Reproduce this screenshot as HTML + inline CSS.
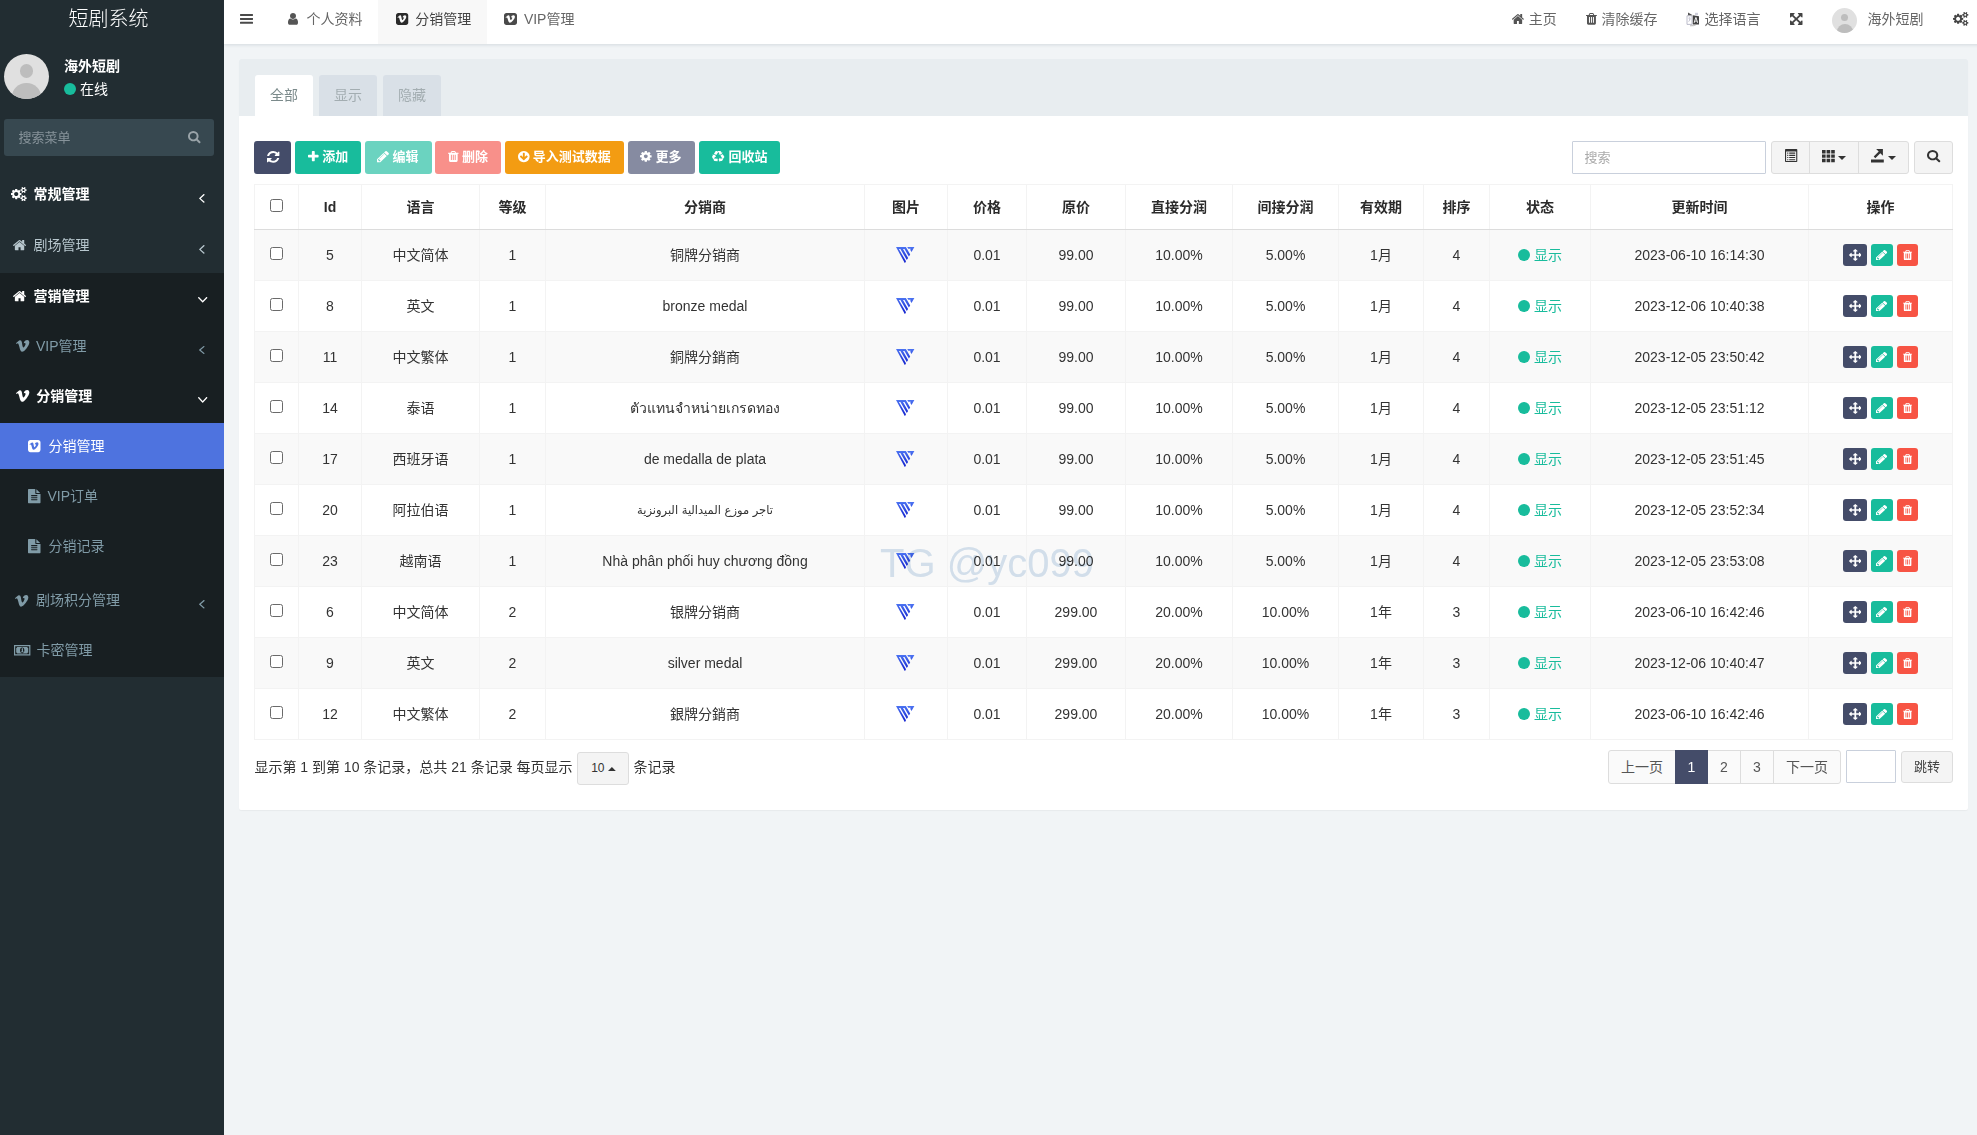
<!DOCTYPE html>
<html lang="zh-CN">
<head>
<meta charset="utf-8">
<title>短剧系统</title>
<style>
html,body{margin:0;padding:0}
body{width:1977px;height:1135px;overflow:hidden;position:relative;background:#f1f4f6;
 font-family:"Liberation Sans","Noto Sans CJK SC",sans-serif;font-size:14px;line-height:20px;color:#333}
.i{position:absolute;display:block;overflow:visible}
.t{position:absolute;white-space:nowrap;display:block}
.b{font-weight:bold}
.abs{position:absolute}
/* sidebar */
#sidebar{position:absolute;left:0;top:0;width:224px;height:1135px;background:#222d32}
#sidebar .open{position:absolute;left:0;top:273px;width:224px;height:403.5px;background:#181f22}
#sidebar .active{position:absolute;left:0;top:423px;width:224px;height:46px;background:#4e73df}
#sidebar .search{position:absolute;left:4px;top:119px;width:210px;height:37px;background:#374850;border-radius:3px}
.avatar{position:absolute;border-radius:50%;background:#e0e0e0;overflow:hidden}
.avatar:before{content:"";position:absolute;left:34.5%;top:23%;width:31%;height:31%;border-radius:50%;background:#bdbdbd}
.avatar:after{content:"";position:absolute;left:18%;top:64%;width:64%;height:60%;border-radius:50%;background:#bdbdbd}
.dot{position:absolute;border-radius:50%;background:#18bc9c}
/* header */
#header{position:absolute;left:224px;top:0;width:1765px;height:44px;background:#fff;box-shadow:0 1px 3px rgba(60,80,100,.16)}
#header .tabon{position:absolute;left:154px;top:0;width:108.5px;height:44px;background:#f8f8f8}
/* panel */
#panel{position:absolute;left:239px;top:59px;width:1729px;height:751px;background:#fff;border-radius:2px;box-shadow:0 1px 1px rgba(0,0,0,.04)}
#panel .head{position:absolute;left:0;top:0;width:1729px;height:57px;background:#e8edf0;border-radius:2px 2px 0 0}
.tab{position:absolute;top:75px;width:58px;height:41px;border-radius:3px 3px 0 0;background:#d9e0e7;text-align:center;line-height:41px;color:#a3adb1}
.tab.on{background:#fff;color:#7b8a8b}
.btn{position:absolute;top:141px;height:33px;border-radius:3px}
.sbtn{position:absolute;background:#f4f4f4;border:1px solid #ddd;box-sizing:border-box}
.inp{position:absolute;background:#fff;border:1px solid #c9d0dc;box-sizing:border-box}
/* table */
#tb{position:absolute;left:254px;top:184px;width:1699px;border-collapse:collapse;table-layout:fixed}
#tb th,#tb td{border:1px solid #f3f3f3;text-align:center;padding:0;vertical-align:middle;overflow:hidden;white-space:nowrap;position:relative}
#tb th{height:44px;font-weight:bold;border-bottom:1px solid #dcdcdc;color:#2b2b2b}
#tb td{height:50px}
#tb tbody tr:nth-child(odd) td{background:#f9f9f9}
.cb{display:inline-block;width:11px;height:11px;border:1px solid #6a6a6a;border-radius:2.5px;background:#fff;vertical-align:middle;position:relative;top:-3px}
.st{color:#18bc9c}
.st i{display:inline-block;width:12px;height:12px;border-radius:50%;background:#18bc9c;vertical-align:middle;margin-right:4px;position:relative;top:-1px}
.ob{display:inline-block;height:22px;border-radius:3px;vertical-align:middle;position:relative;margin:0 2px}
.ob svg{position:absolute;display:block}
.logo{display:inline-block;vertical-align:middle;width:18.5px;height:16.5px;position:relative;left:-0.5px;top:-1.2px}
.pg{position:absolute;top:750px;height:34px;box-sizing:border-box;border:1px solid #ddd;background:#fafafa;color:#555;text-align:center;line-height:32px}
#wm{position:absolute;left:880.1px;top:540.4px;font-size:40px;line-height:46px;color:#d7e4f0;white-space:nowrap;mix-blend-mode:multiply;font-family:"Liberation Sans",sans-serif}
</style>
</head>
<body>

<div id="sidebar">
<div class="open"></div><div class="active"></div>
<span class="t " style="left:68.50px;top:4.60px;line-height:28px;font-size:20px;font-weight:300;color:#fff;letter-spacing:0">短剧系统</span>
<div class="avatar" style="left:4px;top:54px;width:45px;height:45px"></div>
<span class="t b" style="left:64.00px;top:55.60px;line-height:20px;color:#fff">海外短剧</span>
<div class="dot" style="left:63.8px;top:82.8px;width:12.2px;height:12.2px"></div>
<span class="t " style="left:80.00px;top:79.00px;line-height:20px;color:#fff">在线</span>
<div class="search"></div>
<span class="t " style="left:18.50px;top:127.90px;line-height:20px;font-size:13px;color:#87939a">搜索菜单</span>
<svg class="i" style="left:187.50px;top:130.60px;width:12.50px;height:12.20px;" viewBox="64.0 128.0 1664.0 1664.0" preserveAspectRatio="none"><path fill="#9aa4a9" d="M1216 832q0-185-131.500-316.500t-316.500-131.500-316.500 131.500-131.500 316.500 131.500 316.500 316.500 131.500 316.500-131.500 131.500-316.500zm512 832q0 52-38 90t-90 38q-54 0-90-38l-343-342q-179 124-399 124-143 0-273.500-55.500t-225-150-150-225-55.500-273.500 55.500-273.500 150-225 225-150 273.500-55.500 273.500 55.500 225 150 150 225 55.500 273.500q0 220-124 399l343 343q37 37 37 90z"/></svg>
<svg class="i" style="left:11.25px;top:186.90px;width:15.65px;height:14.10px;" viewBox="64.0 16.0 1920.0 1761.0" preserveAspectRatio="none"><path fill="#fff" d="M960 896q0-106-75-181t-181-75-181 75-75 181 75 181 181 75 181-75 75-181zm768 512q0-52-38-90t-90-38-90 38-38 90q0 53 37.500 90.500t90.500 37.500 90.500-37.500 37.500-90.500zm0-1024q0-52-38-90t-90-38-90 38-38 90q0 53 37.500 90.500t90.500 37.500 90.500-37.500 37.500-90.500zm-384 421v185q0 10-7 19.500t-16 10.500l-155 24q-11 35-32 76 34 48 90 115 7 11 7 20 0 12-7 19-23 30-82.500 89.500t-78.500 59.500q-11 0-21-7l-115-90q-37 19-77 31-11 108-23 155-7 24-30 24h-186q-11 0-20-7.500t-10-17.500l-23-153q-34-10-75-31l-118 89q-7 7-20 7-11 0-21-8-144-133-144-160 0-9 7-19 10-14 41-53t47-61q-23-44-35-82l-152-24q-10-1-17-9.500t-7-19.500v-185q0-10 7-19.500t16-10.500l155-24q11-35 32-76-34-48-90-115-7-11-7-20 0-12 7-20 22-30 82-89t79-59q11 0 21 7l115 90q34-18 77-32 11-108 23-154 7-24 30-24h186q11 0 20 7.500t10 17.500l23 153q34 10 75 31l118-89q8-7 20-7 11 0 21 8 144 133 144 160 0 8-7 19-12 16-42 54t-45 60q23 48 34 82l152 23q10 2 17 10.500t7 19.500zm640 533v140q0 16-149 31-12 27-30 52 51 113 51 138 0 4-4 7-122 71-124 71-8 0-46-47t-52-68q-20 2-30 2t-30-2q-14 21-52 68t-46 47q-2 0-124-71-4-3-4-7 0-25 51-138-18-25-30-52-149-15-149-31v-140q0-16 149-31 13-29 30-52-51-113-51-138 0-4 4-7 4-2 35-20t59-34 30-16q8 0 46 46.500t52 67.500q20-2 30-2t30 2q51-71 92-112l6-2q4 0 124 70 4 3 4 7 0 25-51 138 17 23 30 52 149 15 149 31zm0-1024v140q0 16-149 31-12 27-30 52 51 113 51 138 0 4-4 7-122 71-124 71-8 0-46-47t-52-68q-20 2-30 2t-30-2q-14 21-52 68t-46 47q-2 0-124-71-4-3-4-7 0-25 51-138-18-25-30-52-149-15-149-31v-140q0-16 149-31 13-29 30-52-51-113-51-138 0-4 4-7 4-2 35-20t59-34 30-16q8 0 46 46.500t52 67.500q20-2 30-2t30 2q51-71 92-112l6-2q4 0 124 70 4 3 4 7 0 25-51 138 17 23 30 52 149 15 149 31z"/></svg>
<span class="t b" style="left:33.50px;top:183.60px;line-height:20px;color:#fff">常规管理</span>
<svg class="i" style="left:198.75px;top:194.00px;width:5.65px;height:8.75px;" viewBox="621.0 461.0 582.0 998.0" preserveAspectRatio="none"><path fill="#fff" d="M1203 544q0 13-10 23l-393 393 393 393q10 10 10 23t-10 23l-50 50q-10 10-23 10t-23-10l-466-466q-10-10-10-23t10-23l466-466q10-10 23-10t23 10l50 50q10 10 10 23z"/></svg>
<svg class="i" style="left:12.50px;top:239.75px;width:13.10px;height:10.25px;" viewBox="89.9 253.0 1612.2 1283.0" preserveAspectRatio="none"><path fill="#b8c7ce" d="M1472 992v480q0 26-19 45t-45 19h-384v-384h-256v384h-384q-26 0-45-19t-19-45v-480q0-1 .5-3t.5-3l575-474 575 474q1 2 1 6zm223-69l-62 74q-8 9-21 11h-3q-13 0-21-7l-692-577-692 577q-12 8-24 7-13-2-21-11l-62-74q-8-10-7-23.500t11-21.500l719-599q32-26 76-26t76 26l244 204v-195q0-14 9-23t23-9h192q14 0 23 9t9 23v408l219 182q10 8 11 21.500t-7 23.500z"/></svg>
<span class="t " style="left:33.50px;top:234.60px;line-height:20px;color:#b8c7ce">剧场管理</span>
<svg class="i" style="left:198.75px;top:245.00px;width:5.65px;height:8.75px;" viewBox="621.0 461.0 582.0 998.0" preserveAspectRatio="none"><path fill="#b8c7ce" d="M1203 544q0 13-10 23l-393 393 393 393q10 10 10 23t-10 23l-50 50q-10 10-23 10t-23-10l-466-466q-10-10-10-23t10-23l466-466q10-10 23-10t23 10l50 50q10 10 10 23z"/></svg>
<svg class="i" style="left:12.50px;top:290.75px;width:13.10px;height:10.25px;" viewBox="89.9 253.0 1612.2 1283.0" preserveAspectRatio="none"><path fill="#fff" d="M1472 992v480q0 26-19 45t-45 19h-384v-384h-256v384h-384q-26 0-45-19t-19-45v-480q0-1 .5-3t.5-3l575-474 575 474q1 2 1 6zm223-69l-62 74q-8 9-21 11h-3q-13 0-21-7l-692-577-692 577q-12 8-24 7-13-2-21-11l-62-74q-8-10-7-23.500t11-21.500l719-599q32-26 76-26t76 26l244 204v-195q0-14 9-23t23-9h192q14 0 23 9t9 23v408l219 182q10 8 11 21.500t-7 23.500z"/></svg>
<span class="t b" style="left:33.50px;top:285.90px;line-height:20px;color:#fff">营销管理</span>
<svg class="i" style="left:197.50px;top:297.00px;width:9.40px;height:5.60px;" viewBox="397.0 653.0 998.0 582.0" preserveAspectRatio="none"><path fill="#fff" d="M1395 736q0 13-10 23l-466 466q-10 10-23 10t-23-10l-466-466q-10-10-10-23t10-23l50-50q10-10 23-10t23 10l393 393 393-393q10-10 23-10t23 10l50 50q10 10 10 23z"/></svg>
<svg class="i" style="left:15.60px;top:340.00px;width:13.40px;height:11.75px;" viewBox="311.0 415.8 1109.6 960.2" preserveAspectRatio="none"><path fill="#809ba7" d="M1420 638q10-216-161-222-231-8-312 261 44-19 82-19 85 0 74 96-4 57-74 167t-105 110q-43 0-82-169-13-54-45-255-30-189-160-177-59 7-164 100l-81 72-81 72 52 67q76-52 87-52 57 0 107 179 15 55 45 164.500t45 164.500q68 179 164 179 157 0 383-294 220-283 226-444z"/></svg>
<span class="t " style="left:36.00px;top:335.75px;line-height:20px;color:#809ba7">VIP管理</span>
<svg class="i" style="left:198.75px;top:346.40px;width:5.65px;height:8.10px;" viewBox="621.0 461.0 582.0 998.0" preserveAspectRatio="none"><path fill="#809ba7" d="M1203 544q0 13-10 23l-393 393 393 393q10 10 10 23t-10 23l-50 50q-10 10-23 10t-23-10l-466-466q-10-10-10-23t10-23l466-466q10-10 23-10t23 10l50 50q10 10 10 23z"/></svg>
<svg class="i" style="left:15.60px;top:390.00px;width:13.40px;height:11.75px;" viewBox="311.0 415.8 1109.6 960.2" preserveAspectRatio="none"><path fill="#fff" d="M1420 638q10-216-161-222-231-8-312 261 44-19 82-19 85 0 74 96-4 57-74 167t-105 110q-43 0-82-169-13-54-45-255-30-189-160-177-59 7-164 100l-81 72-81 72 52 67q76-52 87-52 57 0 107 179 15 55 45 164.500t45 164.500q68 179 164 179 157 0 383-294 220-283 226-444z"/></svg>
<span class="t b" style="left:36.25px;top:386.00px;line-height:20px;color:#fff">分销管理</span>
<svg class="i" style="left:197.50px;top:396.90px;width:9.40px;height:5.85px;" viewBox="397.0 653.0 998.0 582.0" preserveAspectRatio="none"><path fill="#fff" d="M1395 736q0 13-10 23l-466 466q-10 10-23 10t-23-10l-466-466q-10-10-10-23t10-23l50-50q10-10 23-10t23 10l393 393 393-393q10-10 23-10t23 10l50 50q10 10 10 23z"/></svg>
<svg class="i" style="left:27.75px;top:439.75px;width:12.50px;height:12.15px;" viewBox="128.0 128.0 1536.0 1536.0" preserveAspectRatio="none"><path fill="#fff" d="M1420 638q10-216-161-222-231-8-312 261 44-19 82-19 85 0 74 96-4 57-74 167t-105 110q-43 0-82-169-13-54-45-255-30-189-160-177-59 7-164 100l-81 72-81 72 52 67q76-52 87-52 57 0 107 179 15 55 45 164.500t45 164.500q68 179 164 179 157 0 383-294 220-283 226-444zm244-222v960q0 119-84.500 203.500t-203.500 84.500h-960q-119 0-203.500-84.500t-84.500-203.500v-960q0-119 84.500-203.500t203.500-84.500h960q119 0 203.500 84.500t84.500 203.500z"/></svg>
<span class="t " style="left:48.50px;top:435.80px;line-height:20px;color:#fff">分销管理</span>
<svg class="i" style="left:27.75px;top:488.75px;width:12.50px;height:14.25px;" viewBox="128.0 0.0 1536.0 1792.0" preserveAspectRatio="none"><path fill="#809ba7" d="M1596 476q14 14 28 36h-472v-472q22 14 36 28zm-476 164h544v1056q0 40-28 68t-68 28h-1344q-40 0-68-28t-28-68v-1600q0-40 28-68t68-28h800v544q0 40 28 68t68 28zm160 736v-64q0-14-9-23t-23-9h-704q-14 0-23 9t-9 23v64q0 14 9 23t23 9h704q14 0 23-9t9-23zm0-256v-64q0-14-9-23t-23-9h-704q-14 0-23 9t-9 23v64q0 14 9 23t23 9h704q14 0 23-9t9-23zm0-256v-64q0-14-9-23t-23-9h-704q-14 0-23 9t-9 23v64q0 14 9 23t23 9h704q14 0 23-9t9-23z"/></svg>
<span class="t " style="left:47.50px;top:485.60px;line-height:20px;color:#809ba7">VIP订单</span>
<svg class="i" style="left:27.75px;top:538.75px;width:12.50px;height:14.25px;" viewBox="128.0 0.0 1536.0 1792.0" preserveAspectRatio="none"><path fill="#809ba7" d="M1596 476q14 14 28 36h-472v-472q22 14 36 28zm-476 164h544v1056q0 40-28 68t-68 28h-1344q-40 0-68-28t-28-68v-1600q0-40 28-68t68-28h800v544q0 40 28 68t68 28zm160 736v-64q0-14-9-23t-23-9h-704q-14 0-23 9t-9 23v64q0 14 9 23t23 9h704q14 0 23-9t9-23zm0-256v-64q0-14-9-23t-23-9h-704q-14 0-23 9t-9 23v64q0 14 9 23t23 9h704q14 0 23-9t9-23zm0-256v-64q0-14-9-23t-23-9h-704q-14 0-23 9t-9 23v64q0 14 9 23t23 9h704q14 0 23-9t9-23z"/></svg>
<span class="t " style="left:48.50px;top:535.50px;line-height:20px;color:#809ba7">分销记录</span>
<svg class="i" style="left:15.40px;top:594.50px;width:13.40px;height:11.70px;" viewBox="311.0 415.8 1109.6 960.2" preserveAspectRatio="none"><path fill="#809ba7" d="M1420 638q10-216-161-222-231-8-312 261 44-19 82-19 85 0 74 96-4 57-74 167t-105 110q-43 0-82-169-13-54-45-255-30-189-160-177-59 7-164 100l-81 72-81 72 52 67q76-52 87-52 57 0 107 179 15 55 45 164.500t45 164.500q68 179 164 179 157 0 383-294 220-283 226-444z"/></svg>
<span class="t " style="left:36.00px;top:590.00px;line-height:20px;color:#809ba7">剧场积分管理</span>
<svg class="i" style="left:198.80px;top:600.40px;width:5.70px;height:8.60px;" viewBox="621.0 461.0 582.0 998.0" preserveAspectRatio="none"><path fill="#809ba7" d="M1203 544q0 13-10 23l-393 393 393 393q10 10 10 23t-10 23l-50 50q-10 10-23 10t-23-10l-466-466q-10-10-10-23t10-23l466-466q10-10 23-10t23 10l50 50q10 10 10 23z"/></svg>
<svg class="i" style="left:13.7px;top:644.7px;width:16.4px;height:10.5px" viewBox="0 0 164 105"><path fill="#809ba7" fill-rule="evenodd" d="M0 0h164v105H0zM12 12v81h140V12zM22 30a14 14 0 0 0 10-10h100a14 14 0 0 0 10 10v45a14 14 0 0 0-10 10H32a14 14 0 0 0-10-10zM82 24c-14 0-22 13-22 29s8 29 22 29 22-13 22-29-8-29-22-29zM76 38l8-6h6v34h6v6H70v-6h8V44l-2 2z"/></svg>
<span class="t " style="left:36.50px;top:639.70px;line-height:20px;color:#809ba7">卡密管理</span>
</div>
<div id="header"><div class="tabon"></div></div>
<svg class="i" style="left:240.00px;top:14.00px;width:13.00px;height:9.80px;" viewBox="128.0 256.0 1536.0 1280.0" preserveAspectRatio="none"><path fill="#4a4a4a" d="M1664 1344v128q0 26-19 45t-45 19h-1408q-26 0-45-19t-19-45v-128q0-26 19-45t45-19h1408q26 0 45 19t19 45zm0-512v128q0 26-19 45t-45 19h-1408q-26 0-45-19t-19-45v-128q0-26 19-45t45-19h1408q26 0 45 19t19 45zm0-512v128q0 26-19 45t-45 19h-1408q-26 0-45-19t-19-45v-128q0-26 19-45t45-19h1408q26 0 45 19t19 45z"/></svg>
<svg class="i" style="left:288.00px;top:12.90px;width:10.00px;height:11.85px;" viewBox="256.0 128.0 1280.0 1536.0" preserveAspectRatio="none"><path fill="#555" d="M1536 1399q0 109-62.500 187t-150.500 78h-854q-88 0-150.500-78t-62.500-187q0-85 8.500-160.500t31.500-152 58.500-131 94-89 134.500-34.500q131 128 313 128t313-128q76 0 134.500 34.500t94 89 58.500 131 31.500 152 8.500 160.500zm-256-887q0 159-112.500 271.500t-271.500 112.500-271.500-112.500-112.500-271.500 112.500-271.500 271.500-112.500 271.500 112.500 112.500 271.500z"/></svg>
<span class="t " style="left:306.50px;top:8.50px;line-height:20px;color:#666">个人资料</span>
<svg class="i" style="left:395.50px;top:12.75px;width:12.25px;height:12.00px;" viewBox="128.0 128.0 1536.0 1536.0" preserveAspectRatio="none"><path fill="#2b2b2b" d="M1420 638q10-216-161-222-231-8-312 261 44-19 82-19 85 0 74 96-4 57-74 167t-105 110q-43 0-82-169-13-54-45-255-30-189-160-177-59 7-164 100l-81 72-81 72 52 67q76-52 87-52 57 0 107 179 15 55 45 164.500t45 164.500q68 179 164 179 157 0 383-294 220-283 226-444zm244-222v960q0 119-84.500 203.500t-203.500 84.500h-960q-119 0-203.500-84.500t-84.500-203.500v-960q0-119 84.500-203.500t203.500-84.500h960q119 0 203.500 84.500t84.500 203.500z"/></svg>
<span class="t " style="left:415.25px;top:8.50px;line-height:20px;color:#444">分销管理</span>
<svg class="i" style="left:504.40px;top:12.75px;width:13.00px;height:12.00px;" viewBox="128.0 128.0 1536.0 1536.0" preserveAspectRatio="none"><path fill="#4a4a4a" d="M1420 638q10-216-161-222-231-8-312 261 44-19 82-19 85 0 74 96-4 57-74 167t-105 110q-43 0-82-169-13-54-45-255-30-189-160-177-59 7-164 100l-81 72-81 72 52 67q76-52 87-52 57 0 107 179 15 55 45 164.500t45 164.500q68 179 164 179 157 0 383-294 220-283 226-444zm244-222v960q0 119-84.500 203.500t-203.500 84.500h-960q-119 0-203.500-84.500t-84.500-203.500v-960q0-119 84.500-203.500t203.500-84.500h960q119 0 203.500 84.500t84.500 203.500z"/></svg>
<span class="t " style="left:523.90px;top:8.50px;line-height:20px;color:#666">VIP管理</span>
<svg class="i" style="left:1511.90px;top:13.75px;width:11.85px;height:10.00px;" viewBox="89.9 253.0 1612.2 1283.0" preserveAspectRatio="none"><path fill="#555" d="M1472 992v480q0 26-19 45t-45 19h-384v-384h-256v384h-384q-26 0-45-19t-19-45v-480q0-1 .5-3t.5-3l575-474 575 474q1 2 1 6zm223-69l-62 74q-8 9-21 11h-3q-13 0-21-7l-692-577-692 577q-12 8-24 7-13-2-21-11l-62-74q-8-10-7-23.500t11-21.500l719-599q32-26 76-26t76 26l244 204v-195q0-14 9-23t23-9h192q14 0 23 9t9 23v408l219 182q10 8 11 21.500t-7 23.500z"/></svg>
<span class="t " style="left:1528.75px;top:8.50px;line-height:20px;color:#666">主页</span>
<svg class="i" style="left:1586.00px;top:13.00px;width:10.90px;height:11.75px;" viewBox="192.0 128.0 1408.0 1536.0" preserveAspectRatio="none"><path fill="#555" d="M704 1376v-704q0-14-9-23t-23-9h-64q-14 0-23 9t-9 23v704q0 14 9 23t23 9h64q14 0 23-9t9-23zm256 0v-704q0-14-9-23t-23-9h-64q-14 0-23 9t-9 23v704q0 14 9 23t23 9h64q14 0 23-9t9-23zm256 0v-704q0-14-9-23t-23-9h-64q-14 0-23 9t-9 23v704q0 14 9 23t23 9h64q14 0 23-9t9-23zm-544-992h448l-48-117q-7-9-17-11h-317q-10 2-17 11zm928 32v64q0 14-9 23t-23 9h-96v948q0 83-47 143.500t-113 60.500h-832q-66 0-113-58.500t-47-141.500v-952h-96q-14 0-23-9t-9-23v-64q0-14 9-23t23-9h309l70-167q15-37 54-63t79-26h320q40 0 79 26t54 63l70 167h309q14 0 23 9t9 23z"/></svg>
<span class="t " style="left:1601.50px;top:8.50px;line-height:20px;color:#666">清除缓存</span>
<svg class="i" style="left:1686px;top:11.5px;width:13.5px;height:14.5px" viewBox="0 0 135 145"><path fill="#fff" stroke="#b4b4c4" stroke-width="9" d="M10 38h50v86H10z"/><path fill="#555" d="M20 5l48 27H20z"/><path fill="#444" d="M68 32l62 10v82H68z"/><path fill="#fff" d="M94 52h10l17 56h-10l-3-12H90l-3 12H77zm5 12l-7 23h14z"/><path fill="#c9c9d6" d="M22 58h26v7H22zM32 50h7v40h-7zM22 92q14-8 20-26l6 3q-8 22-22 30z"/><path fill="none" stroke="#9a9a9a" stroke-width="7" d="M40 138q40 4 66-14"/><path fill="#d0d0dc" d="M90 8h30v24H90z"/></svg>
<span class="t " style="left:1704.40px;top:8.50px;line-height:20px;color:#666">选择语言</span>
<svg class="i" style="left:1789.75px;top:13.10px;width:12.50px;height:11.90px;" viewBox="128.0 128.0 1536.0 1536.0" preserveAspectRatio="none"><path fill="#444" d="M1411 541l-355 355 355 355 144-144q29-31 70-14 39 17 39 59v448q0 26-19 45t-45 19h-448q-42 0-59-40-17-39 14-69l144-144-355-355-355 355 144 144q31 30 14 69-17 40-59 40h-448q-26 0-45-19t-19-45v-448q0-42 40-59 39-17 69 14l144 144 355-355-355-355-144 144q-19 19-45 19-12 0-24-5-40-17-40-59v-448q0-26 19-45t45-19h448q42 0 59 40 17 39-14 69l-144 144 355 355 355-355-144-144q-31-30-14-69 17-40 59-40h448q26 0 45 19t19 45v448q0 42-39 59-13 5-25 5-26 0-45-19z"/></svg>
<div class="avatar" style="left:1832px;top:7.8px;width:25px;height:25px"></div>
<span class="t " style="left:1867.50px;top:8.50px;line-height:20px;color:#666">海外短剧</span>
<svg class="i" style="left:1952.75px;top:12.25px;width:15.35px;height:13.75px;" viewBox="64.0 16.0 1920.0 1761.0" preserveAspectRatio="none"><path fill="#444" d="M960 896q0-106-75-181t-181-75-181 75-75 181 75 181 181 75 181-75 75-181zm768 512q0-52-38-90t-90-38-90 38-38 90q0 53 37.500 90.500t90.500 37.500 90.500-37.500 37.500-90.500zm0-1024q0-52-38-90t-90-38-90 38-38 90q0 53 37.500 90.500t90.500 37.500 90.500-37.500 37.500-90.500zm-384 421v185q0 10-7 19.500t-16 10.500l-155 24q-11 35-32 76 34 48 90 115 7 11 7 20 0 12-7 19-23 30-82.500 89.500t-78.500 59.500q-11 0-21-7l-115-90q-37 19-77 31-11 108-23 155-7 24-30 24h-186q-11 0-20-7.500t-10-17.500l-23-153q-34-10-75-31l-118 89q-7 7-20 7-11 0-21-8-144-133-144-160 0-9 7-19 10-14 41-53t47-61q-23-44-35-82l-152-24q-10-1-17-9.500t-7-19.500v-185q0-10 7-19.500t16-10.500l155-24q11-35 32-76-34-48-90-115-7-11-7-20 0-12 7-20 22-30 82-89t79-59q11 0 21 7l115 90q34-18 77-32 11-108 23-154 7-24 30-24h186q11 0 20 7.500t10 17.500l23 153q34 10 75 31l118-89q8-7 20-7 11 0 21 8 144 133 144 160 0 8-7 19-12 16-42 54t-45 60q23 48 34 82l152 23q10 2 17 10.500t7 19.500zm640 533v140q0 16-149 31-12 27-30 52 51 113 51 138 0 4-4 7-122 71-124 71-8 0-46-47t-52-68q-20 2-30 2t-30-2q-14 21-52 68t-46 47q-2 0-124-71-4-3-4-7 0-25 51-138-18-25-30-52-149-15-149-31v-140q0-16 149-31 13-29 30-52-51-113-51-138 0-4 4-7 4-2 35-20t59-34 30-16q8 0 46 46.500t52 67.500q20-2 30-2t30 2q51-71 92-112l6-2q4 0 124 70 4 3 4 7 0 25-51 138 17 23 30 52 149 15 149 31zm0-1024v140q0 16-149 31-12 27-30 52 51 113 51 138 0 4-4 7-122 71-124 71-8 0-46-47t-52-68q-20 2-30 2t-30-2q-14 21-52 68t-46 47q-2 0-124-71-4-3-4-7 0-25 51-138-18-25-30-52-149-15-149-31v-140q0-16 149-31 13-29 30-52-51-113-51-138 0-4 4-7 4-2 35-20t59-34 30-16q8 0 46 46.500t52 67.500q20-2 30-2t30 2q51-71 92-112l6-2q4 0 124 70 4 3 4 7 0 25-51 138 17 23 30 52 149 15 149 31z"/></svg>
<div id="panel"><div class="head"></div></div>
<div class="tab on" style="left:255px">全部</div><div class="tab" style="left:319px">显示</div><div class="tab" style="left:383px">隐藏</div>
<div class="btn" style="left:254px;width:37px;background:#444c69"></div>
<svg class="i" style="left:266.60px;top:150.50px;width:12.40px;height:11.80px;" viewBox="128.0 128.0 1536.0 1536.0" preserveAspectRatio="none"><path fill="#fff" d="M1639 1056q0 5-1 7-64 268-268 434.500t-478 166.500q-146 0-282.500-55t-243.500-157l-129 129q-19 19-45 19t-45-19-19-45v-448q0-26 19-45t45-19h448q26 0 45 19t19 45-19 45l-137 137q71 66 161 102t187 36q134 0 250-65t186-179q11-17 53-117 8-23 30-23h192q13 0 22.500 9.500t9.500 22.500zm25-800v448q0 26-19 45t-45 19h-448q-26 0-45-19t-19-45 19-45l138-138q-148-137-349-137-134 0-250 65t-186 179q-11 17-53 117-8 23-30 23h-199q-13 0-22.500-9.500t-9.500-22.500v-7q65-268 270-434.500t480-166.500q146 0 284 55.500t245 156.500l130-129q19-19 45-19t45 19 19 45z"/></svg>
<div class="btn" style="left:295px;width:66px;background:#18bc9c"></div>
<svg class="i" style="left:307.70px;top:151.20px;width:10.60px;height:10.20px;" viewBox="192.0 128.0 1408.0 1408.0" preserveAspectRatio="none"><path fill="#fff" d="M1600 736v192q0 40-28 68t-68 28h-416v416q0 40-28 68t-68 28h-192q-40 0-68-28t-28-68v-416h-416q-40 0-68-28t-28-68v-192q0-40 28-68t68-28h416v-416q0-40 28-68t68-28h192q40 0 68 28t28 68v416h416q40 0 68 28t28 68z"/></svg>
<span class="t " style="left:322.30px;top:146.50px;line-height:20px;font-size:13px;font-weight:bold;color:#fff">添加</span>
<div class="btn" style="left:365px;width:67px;background:#6bd3c0"></div>
<svg class="i" style="left:377.10px;top:151.00px;width:11.90px;height:11.30px;" viewBox="128.0 149.0 1515.0 1515.0" preserveAspectRatio="none"><path fill="#fff" d="M491 1536l91-91-235-235-91 91v107h128v128h107zm523-928q0-22-22-22-10 0-17 7l-542 542q-7 7-7 17 0 22 22 22 10 0 17-7l542-542q7-7 7-17zm-54-192l416 416-832 832h-416v-416zm683 96q0 53-37 90l-166 166-416-416 166-165q36-38 90-38 53 0 91 38l235 234q37 39 37 91z"/></svg>
<span class="t " style="left:392.40px;top:146.50px;line-height:20px;font-size:13px;font-weight:bold;color:#fff">编辑</span>
<div class="btn" style="left:435px;width:66px;background:#f8908a"></div>
<svg class="i" style="left:448.20px;top:151.00px;width:10.60px;height:10.90px;" viewBox="192.0 128.0 1408.0 1536.0" preserveAspectRatio="none"><path fill="#fff" d="M704 1376v-704q0-14-9-23t-23-9h-64q-14 0-23 9t-9 23v704q0 14 9 23t23 9h64q14 0 23-9t9-23zm256 0v-704q0-14-9-23t-23-9h-64q-14 0-23 9t-9 23v704q0 14 9 23t23 9h64q14 0 23-9t9-23zm256 0v-704q0-14-9-23t-23-9h-64q-14 0-23 9t-9 23v704q0 14 9 23t23 9h64q14 0 23-9t9-23zm-544-992h448l-48-117q-7-9-17-11h-317q-10 2-17 11zm928 32v64q0 14-9 23t-23 9h-96v948q0 83-47 143.500t-113 60.500h-832q-66 0-113-58.500t-47-141.500v-952h-96q-14 0-23-9t-9-23v-64q0-14 9-23t23-9h309l70-167q15-37 54-63t79-26h320q40 0 79 26t54 63l70 167h309q14 0 23 9t9 23z"/></svg>
<span class="t " style="left:462.00px;top:146.50px;line-height:20px;font-size:13px;font-weight:bold;color:#fff">删除</span>
<div class="btn" style="left:505px;width:119px;background:#f39c12"></div>
<svg class="i" style="left:518.00px;top:151.00px;width:11.60px;height:11.20px;" viewBox="128.0 128.0 1536.0 1536.0" preserveAspectRatio="none"><path fill="#fff" d="M1412 897q0-27-18-45l-91-91q-18-18-45-18t-45 18l-189 189v-502q0-26-19-45t-45-19h-128q-26 0-45 19t-19 45v502l-189-189q-19-19-45-19t-45 19l-91 91q-18 18-18 45t18 45l362 362 91 91q18 18 45 18t45-18l91-91 362-362q18-18 18-45zm252-1q0 209-103 385.500t-279.500 279.500-385.500 103-385.500-103-279.500-279.500-103-385.500 103-385.500 279.500-279.500 385.500-103 385.500 103 279.500 279.500 103 385.500z"/></svg>
<span class="t " style="left:532.70px;top:146.50px;line-height:20px;font-size:13px;font-weight:bold;color:#fff">导入测试数据</span>
<div class="btn" style="left:628px;width:67px;background:#868ba1"></div>
<svg class="i" style="left:640.40px;top:151.20px;width:11.60px;height:10.70px;" viewBox="128.0 128.0 1536.0 1536.0" preserveAspectRatio="none"><path fill="#fff" d="M1152 896q0-106-75-181t-181-75-181 75-75 181 75 181 181 75 181-75 75-181zm512-109v222q0 12-8 23t-20 13l-185 28q-19 54-39 91 35 50 107 138 10 12 10 25t-9 23q-27 37-99 108t-94 71q-12 0-26-9l-138-108q-44 23-91 38-16 136-29 186-7 28-36 28h-222q-14 0-24.500-8.500t-11.500-21.500l-28-184q-49-16-90-37l-141 107q-10 9-25 9-14 0-25-11-126-114-165-168-7-10-7-23 0-12 8-23 15-21 51-66.500t54-70.500q-27-50-41-99l-183-27q-13-2-21-12.500t-8-23.500v-222q0-12 8-23t19-13l186-28q14-46 39-92-40-57-107-138-10-12-10-24 0-10 9-23 26-36 98.500-107.500t94.500-71.500q13 0 26 10l138 107q44-23 91-38 16-136 29-186 7-28 36-28h222q14 0 24.500 8.500t11.500 21.500l28 184q49 16 90 37l142-107q9-9 24-9 13 0 25 10 129 119 165 170 7 8 7 22 0 12-8 23-15 21-51 66.500t-54 70.500q26 50 41 98l183 28q13 2 21 12.500t8 23.500z"/></svg>
<span class="t " style="left:655.60px;top:146.50px;line-height:20px;font-size:13px;font-weight:bold;color:#fff">更多</span>
<div class="btn" style="left:699px;width:81px;background:#18bc9c"></div>
<svg class="i" style="left:711.70px;top:151.00px;width:12.30px;height:11.20px;" viewBox="16.0 0.1 1759.8 1705.9" preserveAspectRatio="none"><path fill="#fff" d="M836 1169l-15 368-2 22-420-29q-36-3-67-31.500t-47-65.500q-11-27-14.500-55t4-65 12-55 21.500-64 19-53q78 12 509 28zm-387-586l180 379-147-92q-63 72-111.500 144.500t-72.500 125-39.500 94.500-18.500 63l-4 21-190-357q-17-26-18-56t6-47l8-18q35-63 114-188l-140-86zm1231 517l-188 359q-12 29-36.500 46.500t-43.500 20.500l-18 4q-71 7-219 12l8 164-230-367 211-362 7 173q170 16 283 5t170-33zm-785-924q-47 63-265 435l-317-187-19-12 225-356q20-31 60-45t80-10q24 2 48.500 12t42 21 41.500 33 36 34.500 36 39.500 32 35zm655 307l212 363q18 37 12.500 76t-27.500 74q-13 20-33 37t-38 28-48.500 22-47 16-51.500 14-46 12q-34-72-265-436l313-195zm-143-226l142-83-220 373-419-20 151-86q-34-89-75-166t-75.500-123.500-64.500-80-47-46.500l-17-13 405 1q31-3 58 10.500t39 28.500l11 15q39 61 112 190z"/></svg>
<span class="t " style="left:728.40px;top:146.50px;line-height:20px;font-size:13px;font-weight:bold;color:#fff">回收站</span>
<div class="inp" style="left:1572px;top:141px;width:194px;height:33px;border-radius:1px"></div>
<span class="t " style="left:1584.60px;top:148.00px;line-height:20px;font-size:13px;color:#aaa">搜索</span>
<div class="sbtn" style="left:1771px;top:141px;width:138px;height:33px;border-radius:3px"></div>
<div class="abs" style="left:1809px;top:142px;width:1px;height:31px;background:#ddd"></div><div class="abs" style="left:1858px;top:142px;width:1px;height:31px;background:#ddd"></div>
<svg class="i" style="left:1784.7px;top:149px;width:12.3px;height:13.1px" viewBox="0 0 123 131"><path fill="#333" fill-rule="evenodd" d="M8 0h107q8 0 8 8v115q0 8-8 8H8q-8 0-8-8V8Q0 0 8 0zM11 24v96h101V24z"/><path fill="#333" d="M22 36h11v11H22zM42 36h60v11H42zM22 58h11v11H22zM42 58h60v11H42zM22 80h11v11H22zM42 80h60v11H42zM22 102h11v11H22zM42 102h60v11H42z"/></svg>
<svg class="i" style="left:1821.5px;top:149.6px;width:12.8px;height:12.2px" viewBox="0 0 128 122"><path fill="#333" d="M0 0h36v34H0zM46 0h36v34H46zM92 0h36v34H92zM0 44h36v34H0zM46 44h36v34H46zM92 44h36v34H92zM0 88h36v34H0zM46 88h36v34H46zM92 88h36v34H92z"/></svg>
<svg class="i" style="left:1838.4px;top:155.6px;width:8px;height:4px" viewBox="0 0 8 4"><path fill="#333" d="M0 0h8L4 4z"/></svg>
<svg class="i" style="left:1871px;top:148.6px;width:12.8px;height:13.4px" viewBox="0 0 128 134"><path fill="#333" d="M0 104h128v30H0zM51 0H119V68L92.800 41.800 42.800 91.800 27.200 76.200 77.200 26.200Z"/></svg>
<svg class="i" style="left:1888px;top:155.6px;width:8px;height:4px" viewBox="0 0 8 4"><path fill="#333" d="M0 0h8L4 4z"/></svg>
<div class="sbtn" style="left:1914px;top:141px;width:39px;height:33px;border-radius:3px"></div>
<svg class="i" style="left:1927.00px;top:150.00px;width:13.30px;height:12.20px;" viewBox="64.0 128.0 1664.0 1664.0" preserveAspectRatio="none"><path fill="#333" d="M1216 832q0-185-131.500-316.500t-316.500-131.500-316.500 131.500-131.500 316.500 131.500 316.500 316.500 131.500 316.500-131.500 131.500-316.500zm512 832q0 52-38 90t-90 38q-54 0-90-38l-343-342q-179 124-399 124-143 0-273.500-55.500t-225-150-150-225-55.500-273.500 55.500-273.500 150-225 225-150 273.500-55.500 273.500 55.500 225 150 150 225 55.500 273.500q0 220-124 399l343 343q37 37 37 90z"/></svg>
<table id="tb"><colgroup><col style="width:44px"><col style="width:63px"><col style="width:118px"><col style="width:66px"><col style="width:319px"><col style="width:83px"><col style="width:79px"><col style="width:99px"><col style="width:107px"><col style="width:106px"><col style="width:85px"><col style="width:66px"><col style="width:101px"><col style="width:218px"><col style="width:144px"></colgroup>
<thead><tr><th><span class="cb"></span></th><th>Id</th><th>语言</th><th>等级</th><th>分销商</th><th>图片</th><th>价格</th><th>原价</th><th>直接分润</th><th>间接分润</th><th>有效期</th><th>排序</th><th>状态</th><th>更新时间</th><th>操作</th></tr></thead><tbody>
<tr><td><span class="cb"></span></td><td>5</td><td>中文简体</td><td>1</td><td>铜牌分销商</td><td><svg class="logo" viewBox="0 0 18.5 16.5"><linearGradient id="lg0" x1="0" y1="0" x2="0" y2="1"><stop offset="0" stop-color="#4c74f2"/><stop offset="1" stop-color="#0e1ccc"/></linearGradient><path fill="url(#lg0)" d="M0 0h9.9l4.3 7.4-1.3 2.2L8.5 2H7l5.1 8.9-1.3 2.2L4.4 2H2.9l7.1 12.3-1.1 1.9zM11.2 0h7.2l-2.9 5.1-1.3-2.3.6-1h-2.5z"/></svg></td><td>0.01</td><td>99.00</td><td>10.00%</td><td>5.00%</td><td>1月</td><td>4</td><td class="st"><i></i>显示</td><td>2023-06-10 16:14:30</td><td style="font-size:0"><span class="ob" style="width:24px;background:#444c69"><svg style="left:5.6px;top:5px;width:12.6px;height:12px" viewBox="0.0 0.0 1792.0 1792.0" preserveAspectRatio="none"><path fill="#fff" d="M1792 896q0 26-19 45l-256 256q-19 19-45 19t-45-19-19-45v-128h-384v384h128q26 0 45 19t19 45-19 45l-256 256q-19 19-45 19t-45-19l-256-256q-19-19-19-45t19-45 45-19h128v-384h-384v128q0 26-19 45t-45 19-45-19l-256-256q-19-19-19-45t19-45l256-256q19-19 45-19t45 19 19 45v128h384v-384h-128q-26 0-45-19t-19-45 19-45l256-256q19-19 45-19t45 19l256 256q19 19 19 45t-19 45-45 19h-128v384h384v-128q0-26 19-45t45-19 45 19l256 256q19 19 19 45z"/></svg></span><span class="ob" style="width:22px;background:#18bc9c"><svg style="left:5.3px;top:6px;width:11.2px;height:10.4px" viewBox="128.0 149.0 1515.0 1515.0" preserveAspectRatio="none"><path fill="#fff" d="M491 1536l91-91-235-235-91 91v107h128v128h107zm523-928q0-22-22-22-10 0-17 7l-542 542q-7 7-7 17 0 22 22 22 10 0 17-7l542-542q7-7 7-17zm-54-192l416 416-832 832h-416v-416zm683 96q0 53-37 90l-166 166-416-416 166-165q36-38 90-38 53 0 91 38l235 234q37 39 37 91z"/></svg></span><span class="ob" style="width:21px;background:#f75444"><svg style="left:5.9px;top:6px;width:9.2px;height:10.3px" viewBox="192.0 128.0 1408.0 1536.0" preserveAspectRatio="none"><path fill="#fff" d="M704 1376v-704q0-14-9-23t-23-9h-64q-14 0-23 9t-9 23v704q0 14 9 23t23 9h64q14 0 23-9t9-23zm256 0v-704q0-14-9-23t-23-9h-64q-14 0-23 9t-9 23v704q0 14 9 23t23 9h64q14 0 23-9t9-23zm256 0v-704q0-14-9-23t-23-9h-64q-14 0-23 9t-9 23v704q0 14 9 23t23 9h64q14 0 23-9t9-23zm-544-992h448l-48-117q-7-9-17-11h-317q-10 2-17 11zm928 32v64q0 14-9 23t-23 9h-96v948q0 83-47 143.500t-113 60.500h-832q-66 0-113-58.500t-47-141.500v-952h-96q-14 0-23-9t-9-23v-64q0-14 9-23t23-9h309l70-167q15-37 54-63t79-26h320q40 0 79 26t54 63l70 167h309q14 0 23 9t9 23z"/></svg></span></td></tr>
<tr><td><span class="cb"></span></td><td>8</td><td>英文</td><td>1</td><td>bronze medal</td><td><svg class="logo" viewBox="0 0 18.5 16.5"><linearGradient id="lg1" x1="0" y1="0" x2="0" y2="1"><stop offset="0" stop-color="#4c74f2"/><stop offset="1" stop-color="#0e1ccc"/></linearGradient><path fill="url(#lg1)" d="M0 0h9.9l4.3 7.4-1.3 2.2L8.5 2H7l5.1 8.9-1.3 2.2L4.4 2H2.9l7.1 12.3-1.1 1.9zM11.2 0h7.2l-2.9 5.1-1.3-2.3.6-1h-2.5z"/></svg></td><td>0.01</td><td>99.00</td><td>10.00%</td><td>5.00%</td><td>1月</td><td>4</td><td class="st"><i></i>显示</td><td>2023-12-06 10:40:38</td><td style="font-size:0"><span class="ob" style="width:24px;background:#444c69"><svg style="left:5.6px;top:5px;width:12.6px;height:12px" viewBox="0.0 0.0 1792.0 1792.0" preserveAspectRatio="none"><path fill="#fff" d="M1792 896q0 26-19 45l-256 256q-19 19-45 19t-45-19-19-45v-128h-384v384h128q26 0 45 19t19 45-19 45l-256 256q-19 19-45 19t-45-19l-256-256q-19-19-19-45t19-45 45-19h128v-384h-384v128q0 26-19 45t-45 19-45-19l-256-256q-19-19-19-45t19-45l256-256q19-19 45-19t45 19 19 45v128h384v-384h-128q-26 0-45-19t-19-45 19-45l256-256q19-19 45-19t45 19l256 256q19 19 19 45t-19 45-45 19h-128v384h384v-128q0-26 19-45t45-19 45 19l256 256q19 19 19 45z"/></svg></span><span class="ob" style="width:22px;background:#18bc9c"><svg style="left:5.3px;top:6px;width:11.2px;height:10.4px" viewBox="128.0 149.0 1515.0 1515.0" preserveAspectRatio="none"><path fill="#fff" d="M491 1536l91-91-235-235-91 91v107h128v128h107zm523-928q0-22-22-22-10 0-17 7l-542 542q-7 7-7 17 0 22 22 22 10 0 17-7l542-542q7-7 7-17zm-54-192l416 416-832 832h-416v-416zm683 96q0 53-37 90l-166 166-416-416 166-165q36-38 90-38 53 0 91 38l235 234q37 39 37 91z"/></svg></span><span class="ob" style="width:21px;background:#f75444"><svg style="left:5.9px;top:6px;width:9.2px;height:10.3px" viewBox="192.0 128.0 1408.0 1536.0" preserveAspectRatio="none"><path fill="#fff" d="M704 1376v-704q0-14-9-23t-23-9h-64q-14 0-23 9t-9 23v704q0 14 9 23t23 9h64q14 0 23-9t9-23zm256 0v-704q0-14-9-23t-23-9h-64q-14 0-23 9t-9 23v704q0 14 9 23t23 9h64q14 0 23-9t9-23zm256 0v-704q0-14-9-23t-23-9h-64q-14 0-23 9t-9 23v704q0 14 9 23t23 9h64q14 0 23-9t9-23zm-544-992h448l-48-117q-7-9-17-11h-317q-10 2-17 11zm928 32v64q0 14-9 23t-23 9h-96v948q0 83-47 143.500t-113 60.500h-832q-66 0-113-58.500t-47-141.500v-952h-96q-14 0-23-9t-9-23v-64q0-14 9-23t23-9h309l70-167q15-37 54-63t79-26h320q40 0 79 26t54 63l70 167h309q14 0 23 9t9 23z"/></svg></span></td></tr>
<tr><td><span class="cb"></span></td><td>11</td><td>中文繁体</td><td>1</td><td>銅牌分銷商</td><td><svg class="logo" viewBox="0 0 18.5 16.5"><linearGradient id="lg2" x1="0" y1="0" x2="0" y2="1"><stop offset="0" stop-color="#4c74f2"/><stop offset="1" stop-color="#0e1ccc"/></linearGradient><path fill="url(#lg2)" d="M0 0h9.9l4.3 7.4-1.3 2.2L8.5 2H7l5.1 8.9-1.3 2.2L4.4 2H2.9l7.1 12.3-1.1 1.9zM11.2 0h7.2l-2.9 5.1-1.3-2.3.6-1h-2.5z"/></svg></td><td>0.01</td><td>99.00</td><td>10.00%</td><td>5.00%</td><td>1月</td><td>4</td><td class="st"><i></i>显示</td><td>2023-12-05 23:50:42</td><td style="font-size:0"><span class="ob" style="width:24px;background:#444c69"><svg style="left:5.6px;top:5px;width:12.6px;height:12px" viewBox="0.0 0.0 1792.0 1792.0" preserveAspectRatio="none"><path fill="#fff" d="M1792 896q0 26-19 45l-256 256q-19 19-45 19t-45-19-19-45v-128h-384v384h128q26 0 45 19t19 45-19 45l-256 256q-19 19-45 19t-45-19l-256-256q-19-19-19-45t19-45 45-19h128v-384h-384v128q0 26-19 45t-45 19-45-19l-256-256q-19-19-19-45t19-45l256-256q19-19 45-19t45 19 19 45v128h384v-384h-128q-26 0-45-19t-19-45 19-45l256-256q19-19 45-19t45 19l256 256q19 19 19 45t-19 45-45 19h-128v384h384v-128q0-26 19-45t45-19 45 19l256 256q19 19 19 45z"/></svg></span><span class="ob" style="width:22px;background:#18bc9c"><svg style="left:5.3px;top:6px;width:11.2px;height:10.4px" viewBox="128.0 149.0 1515.0 1515.0" preserveAspectRatio="none"><path fill="#fff" d="M491 1536l91-91-235-235-91 91v107h128v128h107zm523-928q0-22-22-22-10 0-17 7l-542 542q-7 7-7 17 0 22 22 22 10 0 17-7l542-542q7-7 7-17zm-54-192l416 416-832 832h-416v-416zm683 96q0 53-37 90l-166 166-416-416 166-165q36-38 90-38 53 0 91 38l235 234q37 39 37 91z"/></svg></span><span class="ob" style="width:21px;background:#f75444"><svg style="left:5.9px;top:6px;width:9.2px;height:10.3px" viewBox="192.0 128.0 1408.0 1536.0" preserveAspectRatio="none"><path fill="#fff" d="M704 1376v-704q0-14-9-23t-23-9h-64q-14 0-23 9t-9 23v704q0 14 9 23t23 9h64q14 0 23-9t9-23zm256 0v-704q0-14-9-23t-23-9h-64q-14 0-23 9t-9 23v704q0 14 9 23t23 9h64q14 0 23-9t9-23zm256 0v-704q0-14-9-23t-23-9h-64q-14 0-23 9t-9 23v704q0 14 9 23t23 9h64q14 0 23-9t9-23zm-544-992h448l-48-117q-7-9-17-11h-317q-10 2-17 11zm928 32v64q0 14-9 23t-23 9h-96v948q0 83-47 143.500t-113 60.500h-832q-66 0-113-58.500t-47-141.500v-952h-96q-14 0-23-9t-9-23v-64q0-14 9-23t23-9h309l70-167q15-37 54-63t79-26h320q40 0 79 26t54 63l70 167h309q14 0 23 9t9 23z"/></svg></span></td></tr>
<tr><td><span class="cb"></span></td><td>14</td><td>泰语</td><td>1</td><td>ตัวแทนจำหน่ายเกรดทอง</td><td><svg class="logo" viewBox="0 0 18.5 16.5"><linearGradient id="lg3" x1="0" y1="0" x2="0" y2="1"><stop offset="0" stop-color="#4c74f2"/><stop offset="1" stop-color="#0e1ccc"/></linearGradient><path fill="url(#lg3)" d="M0 0h9.9l4.3 7.4-1.3 2.2L8.5 2H7l5.1 8.9-1.3 2.2L4.4 2H2.9l7.1 12.3-1.1 1.9zM11.2 0h7.2l-2.9 5.1-1.3-2.3.6-1h-2.5z"/></svg></td><td>0.01</td><td>99.00</td><td>10.00%</td><td>5.00%</td><td>1月</td><td>4</td><td class="st"><i></i>显示</td><td>2023-12-05 23:51:12</td><td style="font-size:0"><span class="ob" style="width:24px;background:#444c69"><svg style="left:5.6px;top:5px;width:12.6px;height:12px" viewBox="0.0 0.0 1792.0 1792.0" preserveAspectRatio="none"><path fill="#fff" d="M1792 896q0 26-19 45l-256 256q-19 19-45 19t-45-19-19-45v-128h-384v384h128q26 0 45 19t19 45-19 45l-256 256q-19 19-45 19t-45-19l-256-256q-19-19-19-45t19-45 45-19h128v-384h-384v128q0 26-19 45t-45 19-45-19l-256-256q-19-19-19-45t19-45l256-256q19-19 45-19t45 19 19 45v128h384v-384h-128q-26 0-45-19t-19-45 19-45l256-256q19-19 45-19t45 19l256 256q19 19 19 45t-19 45-45 19h-128v384h384v-128q0-26 19-45t45-19 45 19l256 256q19 19 19 45z"/></svg></span><span class="ob" style="width:22px;background:#18bc9c"><svg style="left:5.3px;top:6px;width:11.2px;height:10.4px" viewBox="128.0 149.0 1515.0 1515.0" preserveAspectRatio="none"><path fill="#fff" d="M491 1536l91-91-235-235-91 91v107h128v128h107zm523-928q0-22-22-22-10 0-17 7l-542 542q-7 7-7 17 0 22 22 22 10 0 17-7l542-542q7-7 7-17zm-54-192l416 416-832 832h-416v-416zm683 96q0 53-37 90l-166 166-416-416 166-165q36-38 90-38 53 0 91 38l235 234q37 39 37 91z"/></svg></span><span class="ob" style="width:21px;background:#f75444"><svg style="left:5.9px;top:6px;width:9.2px;height:10.3px" viewBox="192.0 128.0 1408.0 1536.0" preserveAspectRatio="none"><path fill="#fff" d="M704 1376v-704q0-14-9-23t-23-9h-64q-14 0-23 9t-9 23v704q0 14 9 23t23 9h64q14 0 23-9t9-23zm256 0v-704q0-14-9-23t-23-9h-64q-14 0-23 9t-9 23v704q0 14 9 23t23 9h64q14 0 23-9t9-23zm256 0v-704q0-14-9-23t-23-9h-64q-14 0-23 9t-9 23v704q0 14 9 23t23 9h64q14 0 23-9t9-23zm-544-992h448l-48-117q-7-9-17-11h-317q-10 2-17 11zm928 32v64q0 14-9 23t-23 9h-96v948q0 83-47 143.500t-113 60.500h-832q-66 0-113-58.500t-47-141.500v-952h-96q-14 0-23-9t-9-23v-64q0-14 9-23t23-9h309l70-167q15-37 54-63t79-26h320q40 0 79 26t54 63l70 167h309q14 0 23 9t9 23z"/></svg></span></td></tr>
<tr><td><span class="cb"></span></td><td>17</td><td>西班牙语</td><td>1</td><td>de medalla de plata</td><td><svg class="logo" viewBox="0 0 18.5 16.5"><linearGradient id="lg4" x1="0" y1="0" x2="0" y2="1"><stop offset="0" stop-color="#4c74f2"/><stop offset="1" stop-color="#0e1ccc"/></linearGradient><path fill="url(#lg4)" d="M0 0h9.9l4.3 7.4-1.3 2.2L8.5 2H7l5.1 8.9-1.3 2.2L4.4 2H2.9l7.1 12.3-1.1 1.9zM11.2 0h7.2l-2.9 5.1-1.3-2.3.6-1h-2.5z"/></svg></td><td>0.01</td><td>99.00</td><td>10.00%</td><td>5.00%</td><td>1月</td><td>4</td><td class="st"><i></i>显示</td><td>2023-12-05 23:51:45</td><td style="font-size:0"><span class="ob" style="width:24px;background:#444c69"><svg style="left:5.6px;top:5px;width:12.6px;height:12px" viewBox="0.0 0.0 1792.0 1792.0" preserveAspectRatio="none"><path fill="#fff" d="M1792 896q0 26-19 45l-256 256q-19 19-45 19t-45-19-19-45v-128h-384v384h128q26 0 45 19t19 45-19 45l-256 256q-19 19-45 19t-45-19l-256-256q-19-19-19-45t19-45 45-19h128v-384h-384v128q0 26-19 45t-45 19-45-19l-256-256q-19-19-19-45t19-45l256-256q19-19 45-19t45 19 19 45v128h384v-384h-128q-26 0-45-19t-19-45 19-45l256-256q19-19 45-19t45 19l256 256q19 19 19 45t-19 45-45 19h-128v384h384v-128q0-26 19-45t45-19 45 19l256 256q19 19 19 45z"/></svg></span><span class="ob" style="width:22px;background:#18bc9c"><svg style="left:5.3px;top:6px;width:11.2px;height:10.4px" viewBox="128.0 149.0 1515.0 1515.0" preserveAspectRatio="none"><path fill="#fff" d="M491 1536l91-91-235-235-91 91v107h128v128h107zm523-928q0-22-22-22-10 0-17 7l-542 542q-7 7-7 17 0 22 22 22 10 0 17-7l542-542q7-7 7-17zm-54-192l416 416-832 832h-416v-416zm683 96q0 53-37 90l-166 166-416-416 166-165q36-38 90-38 53 0 91 38l235 234q37 39 37 91z"/></svg></span><span class="ob" style="width:21px;background:#f75444"><svg style="left:5.9px;top:6px;width:9.2px;height:10.3px" viewBox="192.0 128.0 1408.0 1536.0" preserveAspectRatio="none"><path fill="#fff" d="M704 1376v-704q0-14-9-23t-23-9h-64q-14 0-23 9t-9 23v704q0 14 9 23t23 9h64q14 0 23-9t9-23zm256 0v-704q0-14-9-23t-23-9h-64q-14 0-23 9t-9 23v704q0 14 9 23t23 9h64q14 0 23-9t9-23zm256 0v-704q0-14-9-23t-23-9h-64q-14 0-23 9t-9 23v704q0 14 9 23t23 9h64q14 0 23-9t9-23zm-544-992h448l-48-117q-7-9-17-11h-317q-10 2-17 11zm928 32v64q0 14-9 23t-23 9h-96v948q0 83-47 143.500t-113 60.500h-832q-66 0-113-58.500t-47-141.500v-952h-96q-14 0-23-9t-9-23v-64q0-14 9-23t23-9h309l70-167q15-37 54-63t79-26h320q40 0 79 26t54 63l70 167h309q14 0 23 9t9 23z"/></svg></span></td></tr>
<tr><td><span class="cb"></span></td><td>20</td><td>阿拉伯语</td><td>1</td><td dir="rtl" style="font-family:'DejaVu Sans','Liberation Sans',sans-serif;font-size:11.5px">تاجر موزع الميدالية البرونزية</td><td><svg class="logo" viewBox="0 0 18.5 16.5"><linearGradient id="lg5" x1="0" y1="0" x2="0" y2="1"><stop offset="0" stop-color="#4c74f2"/><stop offset="1" stop-color="#0e1ccc"/></linearGradient><path fill="url(#lg5)" d="M0 0h9.9l4.3 7.4-1.3 2.2L8.5 2H7l5.1 8.9-1.3 2.2L4.4 2H2.9l7.1 12.3-1.1 1.9zM11.2 0h7.2l-2.9 5.1-1.3-2.3.6-1h-2.5z"/></svg></td><td>0.01</td><td>99.00</td><td>10.00%</td><td>5.00%</td><td>1月</td><td>4</td><td class="st"><i></i>显示</td><td>2023-12-05 23:52:34</td><td style="font-size:0"><span class="ob" style="width:24px;background:#444c69"><svg style="left:5.6px;top:5px;width:12.6px;height:12px" viewBox="0.0 0.0 1792.0 1792.0" preserveAspectRatio="none"><path fill="#fff" d="M1792 896q0 26-19 45l-256 256q-19 19-45 19t-45-19-19-45v-128h-384v384h128q26 0 45 19t19 45-19 45l-256 256q-19 19-45 19t-45-19l-256-256q-19-19-19-45t19-45 45-19h128v-384h-384v128q0 26-19 45t-45 19-45-19l-256-256q-19-19-19-45t19-45l256-256q19-19 45-19t45 19 19 45v128h384v-384h-128q-26 0-45-19t-19-45 19-45l256-256q19-19 45-19t45 19l256 256q19 19 19 45t-19 45-45 19h-128v384h384v-128q0-26 19-45t45-19 45 19l256 256q19 19 19 45z"/></svg></span><span class="ob" style="width:22px;background:#18bc9c"><svg style="left:5.3px;top:6px;width:11.2px;height:10.4px" viewBox="128.0 149.0 1515.0 1515.0" preserveAspectRatio="none"><path fill="#fff" d="M491 1536l91-91-235-235-91 91v107h128v128h107zm523-928q0-22-22-22-10 0-17 7l-542 542q-7 7-7 17 0 22 22 22 10 0 17-7l542-542q7-7 7-17zm-54-192l416 416-832 832h-416v-416zm683 96q0 53-37 90l-166 166-416-416 166-165q36-38 90-38 53 0 91 38l235 234q37 39 37 91z"/></svg></span><span class="ob" style="width:21px;background:#f75444"><svg style="left:5.9px;top:6px;width:9.2px;height:10.3px" viewBox="192.0 128.0 1408.0 1536.0" preserveAspectRatio="none"><path fill="#fff" d="M704 1376v-704q0-14-9-23t-23-9h-64q-14 0-23 9t-9 23v704q0 14 9 23t23 9h64q14 0 23-9t9-23zm256 0v-704q0-14-9-23t-23-9h-64q-14 0-23 9t-9 23v704q0 14 9 23t23 9h64q14 0 23-9t9-23zm256 0v-704q0-14-9-23t-23-9h-64q-14 0-23 9t-9 23v704q0 14 9 23t23 9h64q14 0 23-9t9-23zm-544-992h448l-48-117q-7-9-17-11h-317q-10 2-17 11zm928 32v64q0 14-9 23t-23 9h-96v948q0 83-47 143.500t-113 60.500h-832q-66 0-113-58.500t-47-141.500v-952h-96q-14 0-23-9t-9-23v-64q0-14 9-23t23-9h309l70-167q15-37 54-63t79-26h320q40 0 79 26t54 63l70 167h309q14 0 23 9t9 23z"/></svg></span></td></tr>
<tr><td><span class="cb"></span></td><td>23</td><td>越南语</td><td>1</td><td>Nhà phân phối huy chương đồng</td><td><svg class="logo" viewBox="0 0 18.5 16.5"><linearGradient id="lg6" x1="0" y1="0" x2="0" y2="1"><stop offset="0" stop-color="#4c74f2"/><stop offset="1" stop-color="#0e1ccc"/></linearGradient><path fill="url(#lg6)" d="M0 0h9.9l4.3 7.4-1.3 2.2L8.5 2H7l5.1 8.9-1.3 2.2L4.4 2H2.9l7.1 12.3-1.1 1.9zM11.2 0h7.2l-2.9 5.1-1.3-2.3.6-1h-2.5z"/></svg></td><td>0.01</td><td>99.00</td><td>10.00%</td><td>5.00%</td><td>1月</td><td>4</td><td class="st"><i></i>显示</td><td>2023-12-05 23:53:08</td><td style="font-size:0"><span class="ob" style="width:24px;background:#444c69"><svg style="left:5.6px;top:5px;width:12.6px;height:12px" viewBox="0.0 0.0 1792.0 1792.0" preserveAspectRatio="none"><path fill="#fff" d="M1792 896q0 26-19 45l-256 256q-19 19-45 19t-45-19-19-45v-128h-384v384h128q26 0 45 19t19 45-19 45l-256 256q-19 19-45 19t-45-19l-256-256q-19-19-19-45t19-45 45-19h128v-384h-384v128q0 26-19 45t-45 19-45-19l-256-256q-19-19-19-45t19-45l256-256q19-19 45-19t45 19 19 45v128h384v-384h-128q-26 0-45-19t-19-45 19-45l256-256q19-19 45-19t45 19l256 256q19 19 19 45t-19 45-45 19h-128v384h384v-128q0-26 19-45t45-19 45 19l256 256q19 19 19 45z"/></svg></span><span class="ob" style="width:22px;background:#18bc9c"><svg style="left:5.3px;top:6px;width:11.2px;height:10.4px" viewBox="128.0 149.0 1515.0 1515.0" preserveAspectRatio="none"><path fill="#fff" d="M491 1536l91-91-235-235-91 91v107h128v128h107zm523-928q0-22-22-22-10 0-17 7l-542 542q-7 7-7 17 0 22 22 22 10 0 17-7l542-542q7-7 7-17zm-54-192l416 416-832 832h-416v-416zm683 96q0 53-37 90l-166 166-416-416 166-165q36-38 90-38 53 0 91 38l235 234q37 39 37 91z"/></svg></span><span class="ob" style="width:21px;background:#f75444"><svg style="left:5.9px;top:6px;width:9.2px;height:10.3px" viewBox="192.0 128.0 1408.0 1536.0" preserveAspectRatio="none"><path fill="#fff" d="M704 1376v-704q0-14-9-23t-23-9h-64q-14 0-23 9t-9 23v704q0 14 9 23t23 9h64q14 0 23-9t9-23zm256 0v-704q0-14-9-23t-23-9h-64q-14 0-23 9t-9 23v704q0 14 9 23t23 9h64q14 0 23-9t9-23zm256 0v-704q0-14-9-23t-23-9h-64q-14 0-23 9t-9 23v704q0 14 9 23t23 9h64q14 0 23-9t9-23zm-544-992h448l-48-117q-7-9-17-11h-317q-10 2-17 11zm928 32v64q0 14-9 23t-23 9h-96v948q0 83-47 143.500t-113 60.500h-832q-66 0-113-58.500t-47-141.500v-952h-96q-14 0-23-9t-9-23v-64q0-14 9-23t23-9h309l70-167q15-37 54-63t79-26h320q40 0 79 26t54 63l70 167h309q14 0 23 9t9 23z"/></svg></span></td></tr>
<tr><td><span class="cb"></span></td><td>6</td><td>中文简体</td><td>2</td><td>银牌分销商</td><td><svg class="logo" viewBox="0 0 18.5 16.5"><linearGradient id="lg7" x1="0" y1="0" x2="0" y2="1"><stop offset="0" stop-color="#4c74f2"/><stop offset="1" stop-color="#0e1ccc"/></linearGradient><path fill="url(#lg7)" d="M0 0h9.9l4.3 7.4-1.3 2.2L8.5 2H7l5.1 8.9-1.3 2.2L4.4 2H2.9l7.1 12.3-1.1 1.9zM11.2 0h7.2l-2.9 5.1-1.3-2.3.6-1h-2.5z"/></svg></td><td>0.01</td><td>299.00</td><td>20.00%</td><td>10.00%</td><td>1年</td><td>3</td><td class="st"><i></i>显示</td><td>2023-06-10 16:42:46</td><td style="font-size:0"><span class="ob" style="width:24px;background:#444c69"><svg style="left:5.6px;top:5px;width:12.6px;height:12px" viewBox="0.0 0.0 1792.0 1792.0" preserveAspectRatio="none"><path fill="#fff" d="M1792 896q0 26-19 45l-256 256q-19 19-45 19t-45-19-19-45v-128h-384v384h128q26 0 45 19t19 45-19 45l-256 256q-19 19-45 19t-45-19l-256-256q-19-19-19-45t19-45 45-19h128v-384h-384v128q0 26-19 45t-45 19-45-19l-256-256q-19-19-19-45t19-45l256-256q19-19 45-19t45 19 19 45v128h384v-384h-128q-26 0-45-19t-19-45 19-45l256-256q19-19 45-19t45 19l256 256q19 19 19 45t-19 45-45 19h-128v384h384v-128q0-26 19-45t45-19 45 19l256 256q19 19 19 45z"/></svg></span><span class="ob" style="width:22px;background:#18bc9c"><svg style="left:5.3px;top:6px;width:11.2px;height:10.4px" viewBox="128.0 149.0 1515.0 1515.0" preserveAspectRatio="none"><path fill="#fff" d="M491 1536l91-91-235-235-91 91v107h128v128h107zm523-928q0-22-22-22-10 0-17 7l-542 542q-7 7-7 17 0 22 22 22 10 0 17-7l542-542q7-7 7-17zm-54-192l416 416-832 832h-416v-416zm683 96q0 53-37 90l-166 166-416-416 166-165q36-38 90-38 53 0 91 38l235 234q37 39 37 91z"/></svg></span><span class="ob" style="width:21px;background:#f75444"><svg style="left:5.9px;top:6px;width:9.2px;height:10.3px" viewBox="192.0 128.0 1408.0 1536.0" preserveAspectRatio="none"><path fill="#fff" d="M704 1376v-704q0-14-9-23t-23-9h-64q-14 0-23 9t-9 23v704q0 14 9 23t23 9h64q14 0 23-9t9-23zm256 0v-704q0-14-9-23t-23-9h-64q-14 0-23 9t-9 23v704q0 14 9 23t23 9h64q14 0 23-9t9-23zm256 0v-704q0-14-9-23t-23-9h-64q-14 0-23 9t-9 23v704q0 14 9 23t23 9h64q14 0 23-9t9-23zm-544-992h448l-48-117q-7-9-17-11h-317q-10 2-17 11zm928 32v64q0 14-9 23t-23 9h-96v948q0 83-47 143.500t-113 60.500h-832q-66 0-113-58.500t-47-141.500v-952h-96q-14 0-23-9t-9-23v-64q0-14 9-23t23-9h309l70-167q15-37 54-63t79-26h320q40 0 79 26t54 63l70 167h309q14 0 23 9t9 23z"/></svg></span></td></tr>
<tr><td><span class="cb"></span></td><td>9</td><td>英文</td><td>2</td><td>silver medal</td><td><svg class="logo" viewBox="0 0 18.5 16.5"><linearGradient id="lg8" x1="0" y1="0" x2="0" y2="1"><stop offset="0" stop-color="#4c74f2"/><stop offset="1" stop-color="#0e1ccc"/></linearGradient><path fill="url(#lg8)" d="M0 0h9.9l4.3 7.4-1.3 2.2L8.5 2H7l5.1 8.9-1.3 2.2L4.4 2H2.9l7.1 12.3-1.1 1.9zM11.2 0h7.2l-2.9 5.1-1.3-2.3.6-1h-2.5z"/></svg></td><td>0.01</td><td>299.00</td><td>20.00%</td><td>10.00%</td><td>1年</td><td>3</td><td class="st"><i></i>显示</td><td>2023-12-06 10:40:47</td><td style="font-size:0"><span class="ob" style="width:24px;background:#444c69"><svg style="left:5.6px;top:5px;width:12.6px;height:12px" viewBox="0.0 0.0 1792.0 1792.0" preserveAspectRatio="none"><path fill="#fff" d="M1792 896q0 26-19 45l-256 256q-19 19-45 19t-45-19-19-45v-128h-384v384h128q26 0 45 19t19 45-19 45l-256 256q-19 19-45 19t-45-19l-256-256q-19-19-19-45t19-45 45-19h128v-384h-384v128q0 26-19 45t-45 19-45-19l-256-256q-19-19-19-45t19-45l256-256q19-19 45-19t45 19 19 45v128h384v-384h-128q-26 0-45-19t-19-45 19-45l256-256q19-19 45-19t45 19l256 256q19 19 19 45t-19 45-45 19h-128v384h384v-128q0-26 19-45t45-19 45 19l256 256q19 19 19 45z"/></svg></span><span class="ob" style="width:22px;background:#18bc9c"><svg style="left:5.3px;top:6px;width:11.2px;height:10.4px" viewBox="128.0 149.0 1515.0 1515.0" preserveAspectRatio="none"><path fill="#fff" d="M491 1536l91-91-235-235-91 91v107h128v128h107zm523-928q0-22-22-22-10 0-17 7l-542 542q-7 7-7 17 0 22 22 22 10 0 17-7l542-542q7-7 7-17zm-54-192l416 416-832 832h-416v-416zm683 96q0 53-37 90l-166 166-416-416 166-165q36-38 90-38 53 0 91 38l235 234q37 39 37 91z"/></svg></span><span class="ob" style="width:21px;background:#f75444"><svg style="left:5.9px;top:6px;width:9.2px;height:10.3px" viewBox="192.0 128.0 1408.0 1536.0" preserveAspectRatio="none"><path fill="#fff" d="M704 1376v-704q0-14-9-23t-23-9h-64q-14 0-23 9t-9 23v704q0 14 9 23t23 9h64q14 0 23-9t9-23zm256 0v-704q0-14-9-23t-23-9h-64q-14 0-23 9t-9 23v704q0 14 9 23t23 9h64q14 0 23-9t9-23zm256 0v-704q0-14-9-23t-23-9h-64q-14 0-23 9t-9 23v704q0 14 9 23t23 9h64q14 0 23-9t9-23zm-544-992h448l-48-117q-7-9-17-11h-317q-10 2-17 11zm928 32v64q0 14-9 23t-23 9h-96v948q0 83-47 143.500t-113 60.500h-832q-66 0-113-58.500t-47-141.500v-952h-96q-14 0-23-9t-9-23v-64q0-14 9-23t23-9h309l70-167q15-37 54-63t79-26h320q40 0 79 26t54 63l70 167h309q14 0 23 9t9 23z"/></svg></span></td></tr>
<tr><td><span class="cb"></span></td><td>12</td><td>中文繁体</td><td>2</td><td>銀牌分銷商</td><td><svg class="logo" viewBox="0 0 18.5 16.5"><linearGradient id="lg9" x1="0" y1="0" x2="0" y2="1"><stop offset="0" stop-color="#4c74f2"/><stop offset="1" stop-color="#0e1ccc"/></linearGradient><path fill="url(#lg9)" d="M0 0h9.9l4.3 7.4-1.3 2.2L8.5 2H7l5.1 8.9-1.3 2.2L4.4 2H2.9l7.1 12.3-1.1 1.9zM11.2 0h7.2l-2.9 5.1-1.3-2.3.6-1h-2.5z"/></svg></td><td>0.01</td><td>299.00</td><td>20.00%</td><td>10.00%</td><td>1年</td><td>3</td><td class="st"><i></i>显示</td><td>2023-06-10 16:42:46</td><td style="font-size:0"><span class="ob" style="width:24px;background:#444c69"><svg style="left:5.6px;top:5px;width:12.6px;height:12px" viewBox="0.0 0.0 1792.0 1792.0" preserveAspectRatio="none"><path fill="#fff" d="M1792 896q0 26-19 45l-256 256q-19 19-45 19t-45-19-19-45v-128h-384v384h128q26 0 45 19t19 45-19 45l-256 256q-19 19-45 19t-45-19l-256-256q-19-19-19-45t19-45 45-19h128v-384h-384v128q0 26-19 45t-45 19-45-19l-256-256q-19-19-19-45t19-45l256-256q19-19 45-19t45 19 19 45v128h384v-384h-128q-26 0-45-19t-19-45 19-45l256-256q19-19 45-19t45 19l256 256q19 19 19 45t-19 45-45 19h-128v384h384v-128q0-26 19-45t45-19 45 19l256 256q19 19 19 45z"/></svg></span><span class="ob" style="width:22px;background:#18bc9c"><svg style="left:5.3px;top:6px;width:11.2px;height:10.4px" viewBox="128.0 149.0 1515.0 1515.0" preserveAspectRatio="none"><path fill="#fff" d="M491 1536l91-91-235-235-91 91v107h128v128h107zm523-928q0-22-22-22-10 0-17 7l-542 542q-7 7-7 17 0 22 22 22 10 0 17-7l542-542q7-7 7-17zm-54-192l416 416-832 832h-416v-416zm683 96q0 53-37 90l-166 166-416-416 166-165q36-38 90-38 53 0 91 38l235 234q37 39 37 91z"/></svg></span><span class="ob" style="width:21px;background:#f75444"><svg style="left:5.9px;top:6px;width:9.2px;height:10.3px" viewBox="192.0 128.0 1408.0 1536.0" preserveAspectRatio="none"><path fill="#fff" d="M704 1376v-704q0-14-9-23t-23-9h-64q-14 0-23 9t-9 23v704q0 14 9 23t23 9h64q14 0 23-9t9-23zm256 0v-704q0-14-9-23t-23-9h-64q-14 0-23 9t-9 23v704q0 14 9 23t23 9h64q14 0 23-9t9-23zm256 0v-704q0-14-9-23t-23-9h-64q-14 0-23 9t-9 23v704q0 14 9 23t23 9h64q14 0 23-9t9-23zm-544-992h448l-48-117q-7-9-17-11h-317q-10 2-17 11zm928 32v64q0 14-9 23t-23 9h-96v948q0 83-47 143.500t-113 60.500h-832q-66 0-113-58.500t-47-141.500v-952h-96q-14 0-23-9t-9-23v-64q0-14 9-23t23-9h309l70-167q15-37 54-63t79-26h320q40 0 79 26t54 63l70 167h309q14 0 23 9t9 23z"/></svg></span></td></tr>
</tbody></table>
<div id="wm">TG @yc099</div>
<span class="t " style="left:254.40px;top:757.00px;line-height:20px;color:#333">显示第 1 到第 10 条记录，总共 21 条记录 每页显示</span>
<div class="sbtn" style="left:577px;top:752px;width:52px;height:33px;border-radius:3px"></div>
<span class="t " style="left:591.20px;top:758.00px;line-height:20px;font-size:12px;color:#333">10</span>
<svg class="i" style="left:608.3px;top:766.6px;width:7.8px;height:4px" viewBox="0 0 8 4"><path fill="#333" d="M0 4h8L4 0z"/></svg>
<span class="t " style="left:633.50px;top:757.00px;line-height:20px;color:#333">条记录</span>
<div class="pg" style="left:1608px;width:68px;border-radius:3px 0 0 3px">上一页</div>
<div class="pg" style="left:1675px;width:33px;background:#444c69;border-color:#444c69;color:#fff;z-index:2">1</div>
<div class="pg" style="left:1707px;width:34px">2</div>
<div class="pg" style="left:1740px;width:34px">3</div>
<div class="pg" style="left:1773px;width:68px;border-radius:0 3px 3px 0">下一页</div>
<div class="inp" style="left:1846px;top:750px;width:50px;height:33px;border-radius:1px"></div>
<div class="sbtn" style="left:1901px;top:751px;width:52px;height:32px;border-radius:3px;text-align:center;line-height:30px;font-size:13px;color:#444">跳转</div>
</body></html>
